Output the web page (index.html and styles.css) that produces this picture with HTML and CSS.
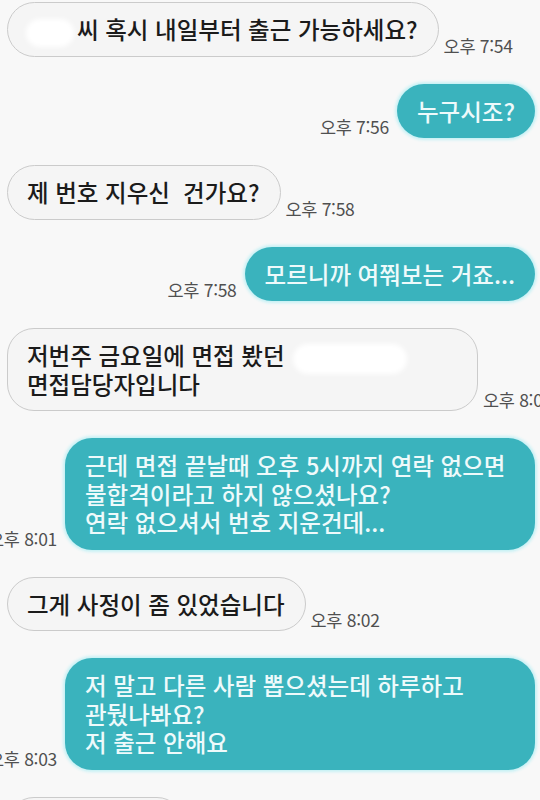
FILE: index.html
```html
<!DOCTYPE html>
<html lang="ko">
<head>
<meta charset="utf-8">
<title>메시지</title>
<link rel="stylesheet" href="styles.css">
</head>
<body>
<main class="chat">
  <div class="row in">
    <div class="bubble"><span class="redact name"></span>씨 혹시 내일부터 출근 가능하세요?</div>
    <span class="time">오후 7:54</span>
  </div>
  <div class="row out">
    <span class="time">오후 7:56</span>
    <div class="bubble">누구시조?</div>
  </div>
  <div class="row in">
    <div class="bubble">제 번호 지우신&nbsp; 건가요?</div>
    <span class="time">오후 7:58</span>
  </div>
  <div class="row out">
    <span class="time">오후 7:58</span>
    <div class="bubble">모르니까 여쭤보는 거죠...</div>
  </div>
  <div class="row in">
    <div class="bubble full">저번주 금요일에 면접 봤던 <span class="redact company"></span><br>면접담당자입니다</div>
    <span class="time">오후 8:01</span>
  </div>
  <div class="row out">
    <span class="time">오후 8:01</span>
    <div class="bubble full">근데 면접 끝날때 오후 5시까지 연락 없으면<br>불합격이라고 하지 않으셨나요?<br>연락 없으셔서 번호 지운건데...</div>
  </div>
  <div class="row in">
    <div class="bubble">그게 사정이 좀 있었습니다</div>
    <span class="time">오후 8:02</span>
  </div>
  <div class="row out">
    <span class="time">오후 8:03</span>
    <div class="bubble full">저 말고 다른 사람 뽑으셨는데 하루하고<br>관뒀나봐요?<br>저 출근 안해요</div>
  </div>
  <div class="row in">
    <div class="bubble">네 알겠습니다</div>
    <span class="time">오후 8:04</span>
  </div>
</main>
</body>
</html>
```
FILE: styles.css
```css
html, body {
  margin: 0;
  padding: 0;
  background: #f8f8f8;
  overflow: hidden;
}
body {
  width: 540px;
  height: 800px;
  font-family: "Noto Sans CJK KR", "Noto Sans", sans-serif;
}
.chat {
  display: flex;
  flex-direction: column;
  gap: 27px;
  padding-top: 2px;
}
.row {
  display: flex;
  align-items: flex-end;
  white-space: nowrap;
}
.row.in {
  justify-content: flex-start;
  padding-left: 7px;
  gap: 5px;
}
.row.out {
  justify-content: flex-end;
  padding-right: 5px;
  gap: 8px;
}
.bubble {
  flex-shrink: 0;
  box-sizing: border-box;
  max-width: 471px;
  padding: 13px 20px;
  font-size: 23.5px;
  font-weight: 500;
  line-height: 28.5px;
  border-radius: 28px;
}
.bubble.full {
  width: 471px;
  border-radius: 27px;
}
.in .bubble {
  background: #f5f5f5;
  color: #1b1b1b;
  border: 1px solid #cbcbcb;
  padding: 12px 20px 12px 19px;
}
.out .bubble {
  background: #3ab3bd;
  color: #eefafb;
  box-shadow: 0 0 3px 2px #c6f1f5;
}
.out .bubble.full {
  width: 470px;
}
.time {
  flex-shrink: 0;
  font-size: 17.5px;
  line-height: 20px;
  letter-spacing: -0.3px;
  color: #505050;
  margin-bottom: 1px;
}
.redact {
  display: inline-block;
  vertical-align: middle;
  background: #ffffff;
  border-radius: 12px;
  box-shadow: 0 0 5px 4px #ffffff;
}
.redact.name {
  width: 40px;
  height: 20px;
  margin-left: 3px;
  margin-right: 7px;
}
.redact.company {
  width: 106px;
  height: 22px;
  margin-left: 6px;
}
```
